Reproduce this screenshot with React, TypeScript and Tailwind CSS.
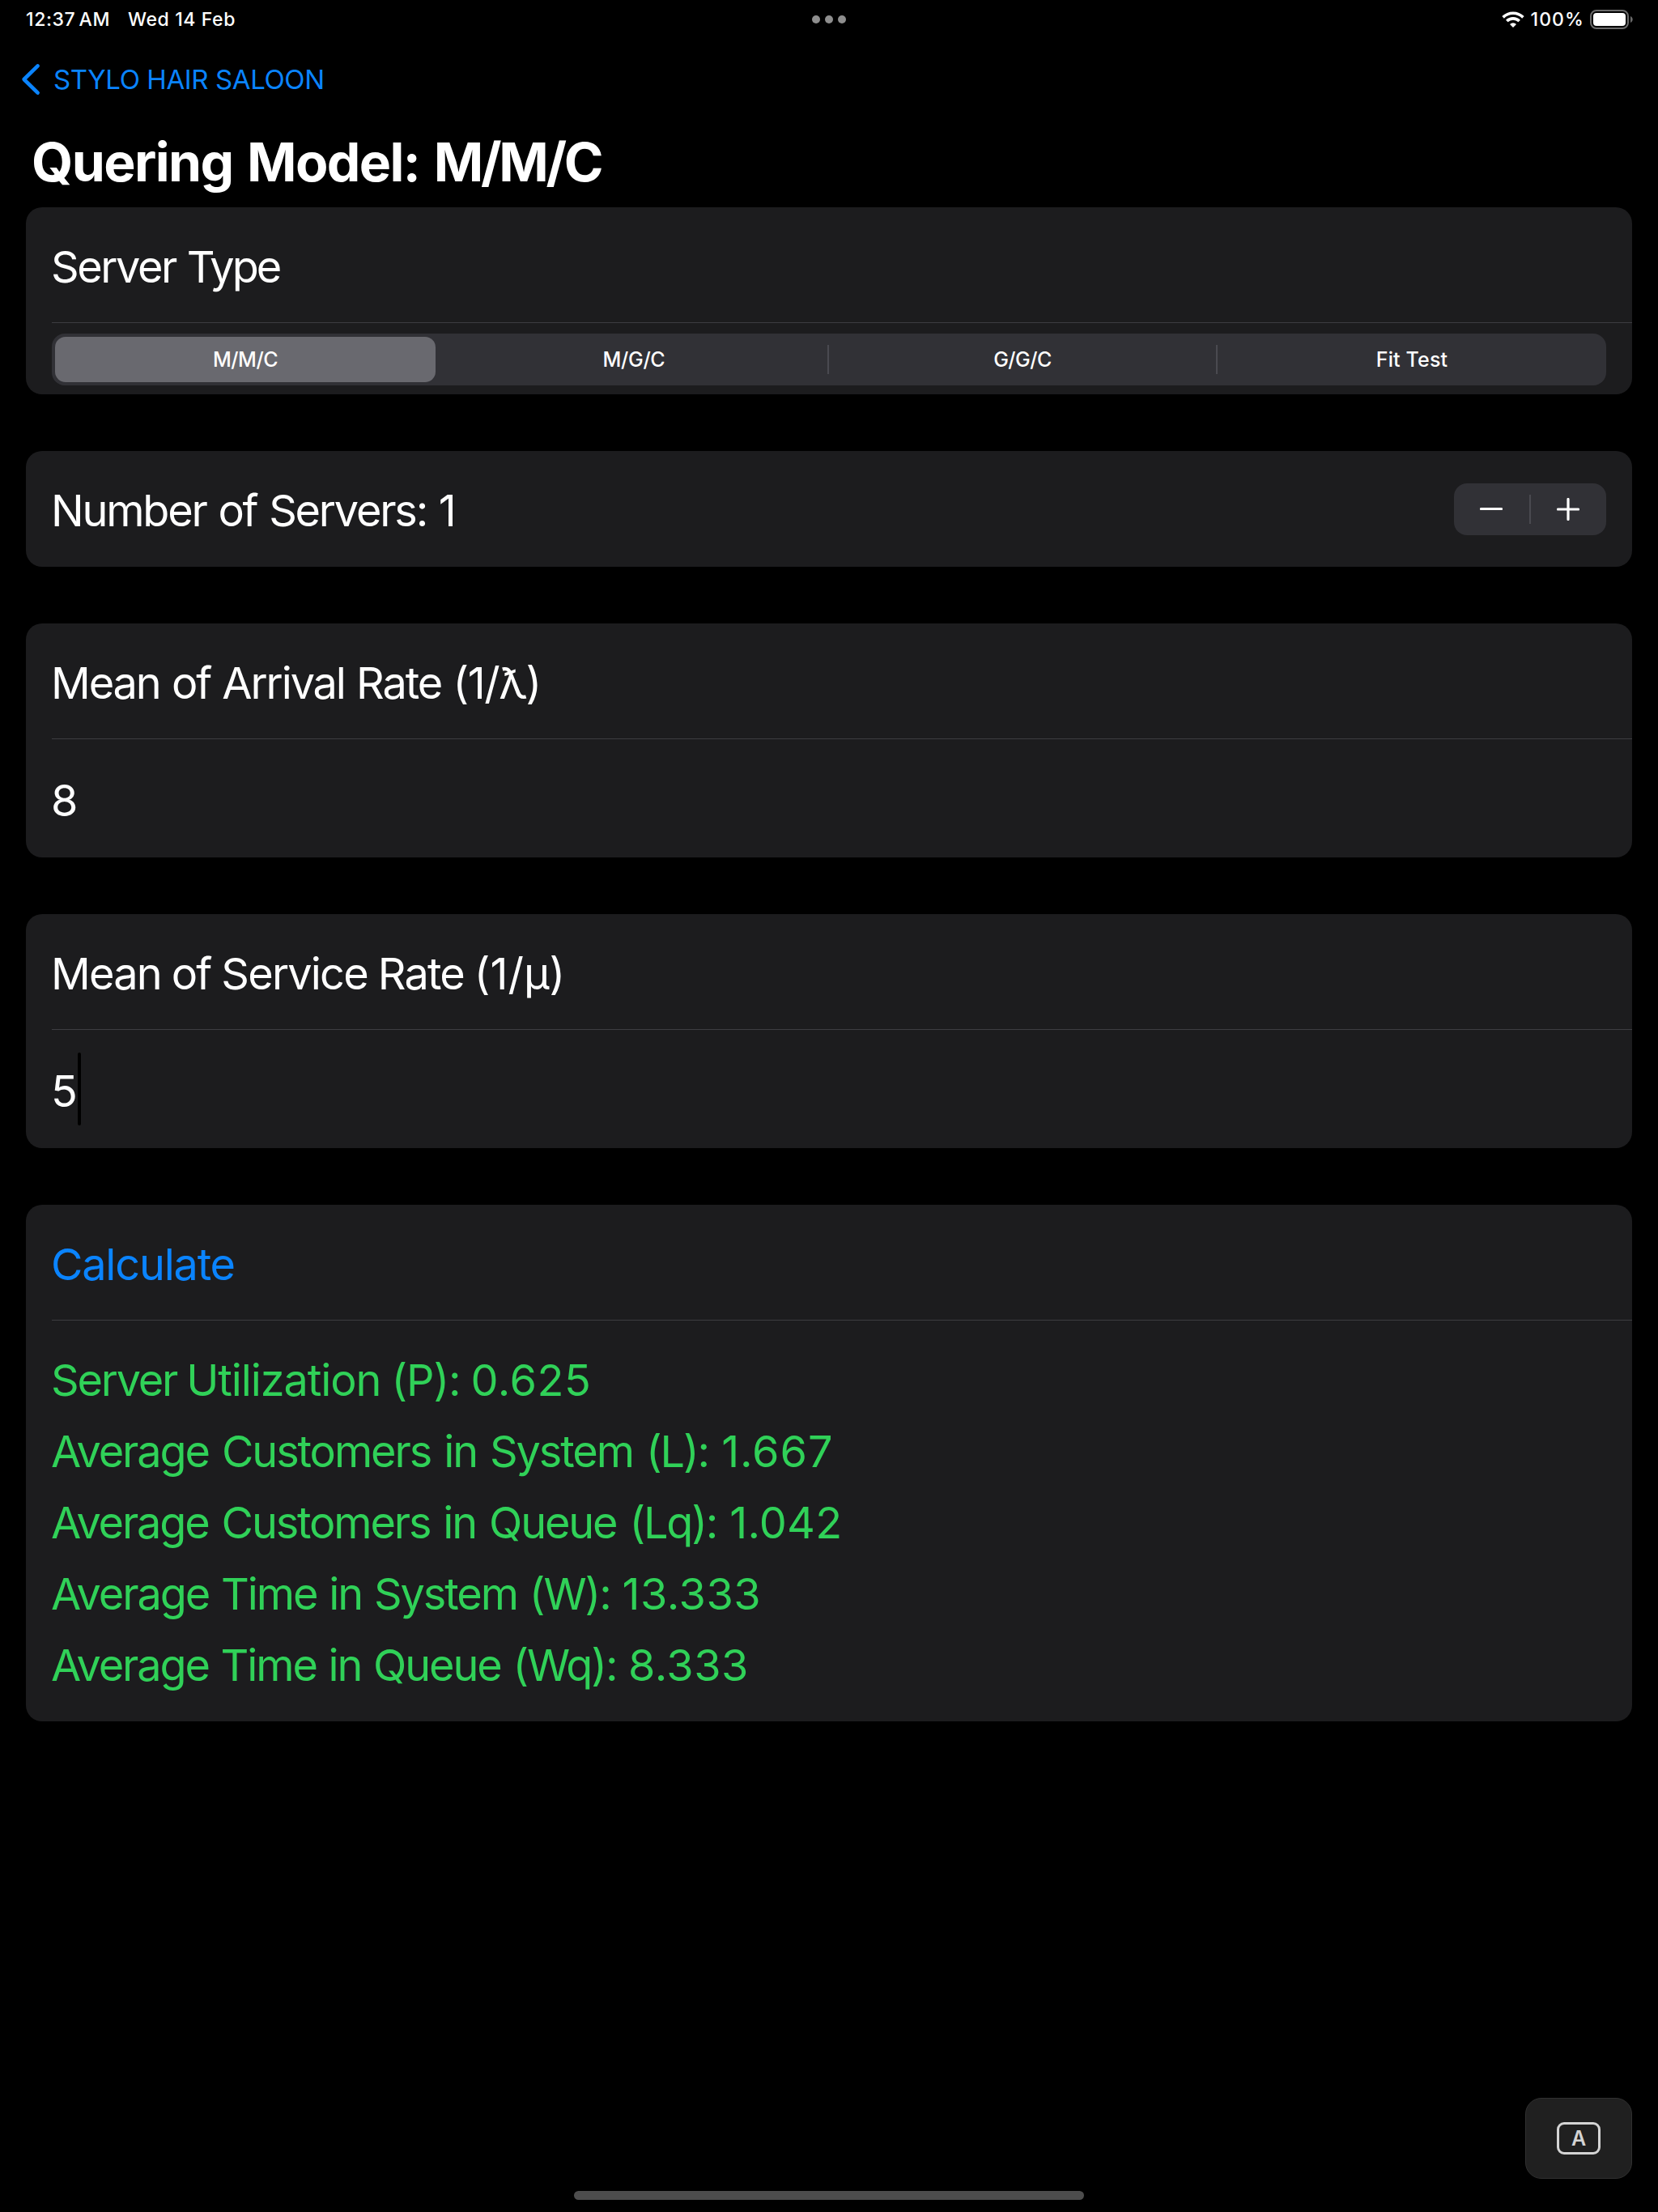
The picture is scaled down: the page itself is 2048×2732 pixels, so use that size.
import type { ReactNode } from "react";

function Card({ children, className = "" }: { children: ReactNode; className?: string }) {
  return <section className={`flex flex-col rounded-[20px] bg-[#1c1c1e] pl-8 ${className}`}>{children}</section>;
}

function Row({ children, className = "" }: { children: ReactNode; className?: string }) {
  return (
    <div className={`-ml-px flex items-center whitespace-pre pt-[5px] text-[54px] leading-[88px] ${className}`}>
      {children}
    </div>
  );
}

const Separator = () => <div className="h-px shrink-0 bg-[#3d3d41]" />;

function StatusBar() {
  return (
    <header className="grid h-12 shrink-0 grid-cols-3 items-center px-8 text-[23px] font-medium">
      <div className="flex gap-[22px] whitespace-pre">
        <span className="tracking-[0.6px] [word-spacing:-2.5px]">12:37 AM</span>
        <span className="tracking-[0.6px]">Wed 14 Feb</span>
      </div>
      <div className="flex justify-center gap-[6px]">
        <i className="size-[10px] rounded-full bg-[#8e8e8e]" />
        <i className="size-[10px] rounded-full bg-[#8e8e8e]" />
        <i className="size-[10px] rounded-full bg-[#8e8e8e]" />
      </div>
      <div className="-mr-[2px] flex items-center justify-end">
        <svg className="mr-2 h-5 w-7" viewBox="0 0 28 20" fill="none" stroke="#fff" strokeWidth="3.6">
          <path d="M1.6 7.4a17.6 17.6 0 0 1 24.8 0" />
          <path d="M6.3 12.1a10.9 10.9 0 0 1 15.4 0" />
          <path d="M14 20l-4-4.1a5.7 5.7 0 0 1 8 0z" fill="#fff" stroke="none" />
        </svg>
        <span className="mr-[7px] tracking-[1.1px]">100%</span>
        <svg className="h-6 w-[54px]" viewBox="0 0 54 24" fill="none">
          <rect x="1" y="1" width="46" height="22" rx="7" stroke="#6a6a6a" strokeWidth="2" />
          <rect x="4" y="4" width="40" height="16" rx="4" fill="#fff" />
          <path d="M50 8c3.6 1.4 3.6 6.6 0 8z" fill="#6a6a6a" />
        </svg>
      </div>
    </header>
  );
}

function SegmentedControl() {
  return (
    <div className="mr-8 mt-[13px] grid h-16 grid-cols-4 items-center rounded-[16px] bg-[#313136] text-center text-[25px] leading-9 font-[450]">
      <div className="ml-1 mr-[6px] rounded-[13px] bg-[#69696f] py-[10px] tracking-[-0.5px]">M/M/C</div>
      <div className="relative pr-[2px] tracking-[-0.3px]">
        M/G/C
        <i className="absolute top-0 right-0 h-9 w-[2px] bg-[#4a4a50]" />
      </div>
      <div className="relative pr-[2px] tracking-[-0.5px]">
        G/G/C
        <i className="absolute top-0 right-0 h-9 w-[2px] bg-[#4a4a50]" />
      </div>
      <div className="tracking-[0.15px]">Fit Test</div>
    </div>
  );
}

function Stepper() {
  return (
    <div className="mr-8 grid h-16 w-[188px] grid-cols-[93px_2px_93px] items-center justify-items-center rounded-[16px] bg-[#313136]">
      <svg className="mr-[2px] size-7" viewBox="0 0 28 28" stroke="#fff" strokeWidth="3.2" strokeLinecap="round">
        <path d="M1.5 13.5h25" />
      </svg>
      <div className="h-9 w-[2px] bg-[#4a4a50]" />
      <svg className="mr-px size-7" viewBox="0 0 28 28" stroke="#fff" strokeWidth="3.2" strokeLinecap="round">
        <path d="M1.5 14h25M14 1.5v25" />
      </svg>
    </div>
  );
}

function Results() {
  return (
    <div className="-ml-px flex flex-col whitespace-pre pt-[30px] text-[54px] leading-[88px] text-[#30d158]">
      <p className="[word-spacing:-1px]">
        <span className="tracking-[-2.2px]">Server </span>
        <span className="tracking-[-1.1px]">Utilization (P): </span>
        <span className="tracking-[0.5px]">0.625</span>
      </p>
      <p className="[word-spacing:3px]">
        <span className="tracking-[-2.1px]">Average Customers in System (L): </span>
        <span className="tracking-[0.9px]">1.667</span>
      </p>
      <p className="[word-spacing:3px]">
        <span className="tracking-[-2.15px]">Average Customers in Queue (Lq): </span>
        <span className="tracking-[0.2px]">1.042</span>
      </p>
      <p className="[word-spacing:1.6px]">
        <span className="tracking-[-2.05px]">Average Time in System (W): </span>
        <span className="tracking-[0.6px]">13.333</span>
      </p>
      <p className="[word-spacing:1.6px]">
        <span className="tracking-[-2.1px]">Average Time in Queue (Wq): </span>
        <span className="tracking-[0.5px]">8.333</span>
      </p>
    </div>
  );
}

export default function App() {
  return (
    <div className="flex h-[2732px] w-[2048px] flex-col overflow-hidden bg-black font-['Inter',sans-serif] text-white">
      <StatusBar />
      <nav className="flex h-[100px] shrink-0 items-center pl-[26px] text-[33px] text-[#0a84ff]">
        <svg className="mr-4 h-10 w-6" viewBox="0 0 24 40" fill="none" stroke="currentColor" strokeWidth="4.6" strokeLinecap="round" strokeLinejoin="round">
          <path d="M20.6 3.4L3.6 20l17 16.6" />
        </svg>
        <span className="pt-px tracking-[-0.4px]">STYLO HAIR SALOON</span>
      </nav>
      <h1 className="h-[108px] shrink-0 whitespace-pre pl-[39px] text-[66px] font-bold leading-[104px] tracking-[-1.6px] [word-spacing:3.5px]">
        Quering Model: <span className="tracking-[-3.3px]">M/M/C</span>
      </h1>
      <main className="flex flex-col gap-[70px] px-8">
        <Card className="h-[231px]">
          <Row className="h-[142px] [word-spacing:1px]">
            <span className="tracking-[-2.4px]">Server </span>
            <span className="tracking-[-3px]">Type</span>
          </Row>
          <Separator />
          <SegmentedControl />
        </Card>
        <Card className="h-[143px]">
          <div className="flex h-full items-center justify-between">
            <Row className="tracking-[-2.2px] [word-spacing:1.8px]">Number of Servers: 1</Row>
            <Stepper />
          </div>
        </Card>
        <Card className="h-[289px]">
          <Row className="h-[142px] tracking-[-2.1px] [word-spacing:1.2px]">
            Mean of Arrival Rate <span className="tracking-[-1.4px]">(1/ƛ)</span>
          </Row>
          <Separator />
          <Row className="h-[146px]">8</Row>
        </Card>
        <Card className="h-[289px]">
          <Row className="h-[142px] tracking-[-1.8px] [word-spacing:-0.5px]">
            Mean of Service Rate <span className="tracking-[0px]">(1/μ)</span>
          </Row>
          <Separator />
          <Row className="h-[146px]">
            5<i className="-mt-[5px] h-[90px] w-1 rounded-full bg-black" />
          </Row>
        </Card>
        <Card className="h-[638px]">
          <Row className="h-[142px] tracking-[-1.2px] text-[#0a84ff]">Calculate</Row>
          <Separator />
          <Results />
        </Card>
      </main>
      <footer className="mt-auto flex flex-col items-center">
        <button className="mr-8 flex h-[100px] w-[132px] items-center justify-center self-end rounded-[20px] border border-[#303030] bg-[#202020]">
          <span className="flex h-10 w-[54px] items-center justify-center rounded-[9px] border-[3px] border-[#d4d4d4] pt-px text-[25px] font-semibold leading-none text-[#d4d4d4]">
            A
          </span>
        </button>
        <div className="mt-[15px] mb-[15px] h-[11px] w-[630px] rounded-full bg-[#4d4d4d]" />
      </footer>
    </div>
  );
}
